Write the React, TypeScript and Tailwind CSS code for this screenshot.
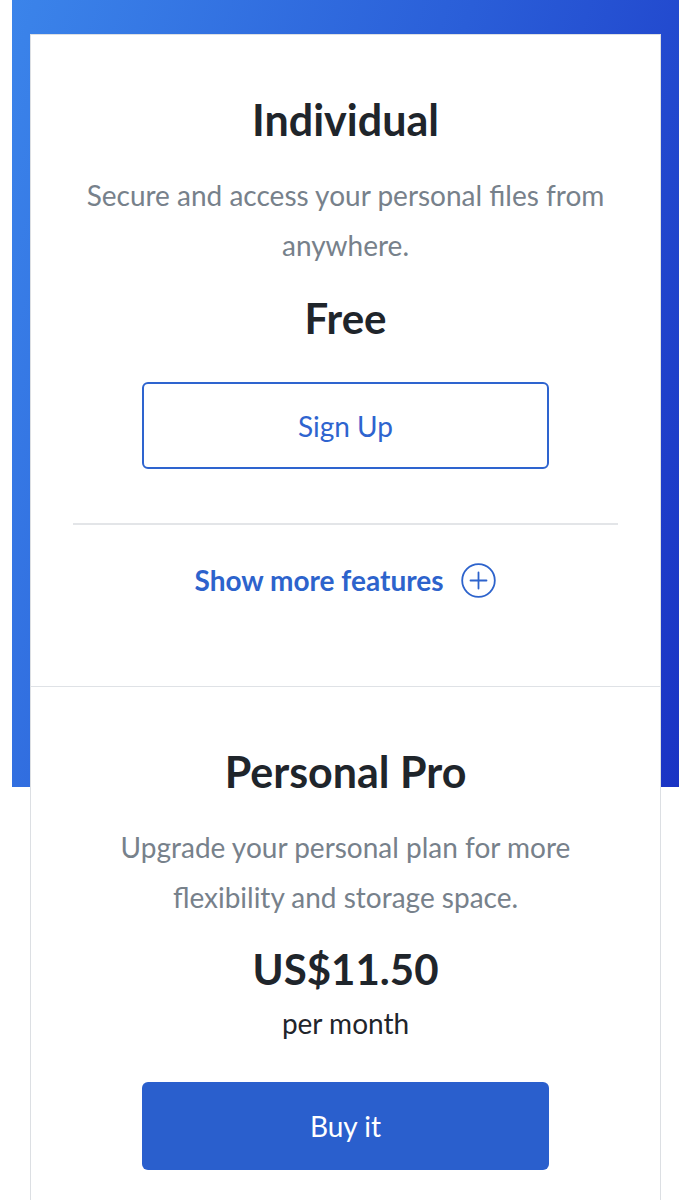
import React from 'react';

interface PlanProps {
  name: string;
  blurb: string;
  children: React.ReactNode;
}

function PlanSection({ name, blurb, children }: PlanProps) {
  return (
    <div className="flex flex-col items-center px-[42px] pt-[61px]">
      <h2 className="text-[43px] leading-[48px] font-bold text-[#1f252b]">{name}</h2>
      <p className="mt-[26px] text-center text-[28px] leading-[50px] text-[#77818b]">{blurb}</p>
      {children}
    </div>
  );
}

function PlusCircle() {
  return (
    <svg width="35" height="35" viewBox="0 0 35 35" fill="none" stroke="#2d63cc" strokeWidth="1.8">
      <circle cx="17.5" cy="17.5" r="16.3" />
      <path d="M17.5 9.5v16M9.5 17.5h16" strokeLinecap="round" />
    </svg>
  );
}

export default function App() {
  return (
    <div className="min-h-[1200px] bg-white font-['Lato','Open_Sans',sans-serif]">
      <div className="ml-[12px] mr-[18px] px-[18px] pt-[34px] bg-no-repeat bg-size-[100%_787px] bg-[linear-gradient(108deg,#3b84ea_0%,#2a5ed8_50%,#1a33c4_100%)]">
        <div className="border border-[#dcdfe3] bg-white">
          <PlanSection name="Individual" blurb="Secure and access your personal files from anywhere.">
            <div className="mt-[25px] text-[42px] leading-[46px] font-bold text-[#1f252b]">Free</div>
            <button className="mt-[41px] flex h-[87px] w-[407px] items-center justify-center rounded-[6px] border-2 border-[#2e64cf] text-[28px] text-[#2e64cf]">
              Sign Up
            </button>
            <div className="mt-[54px] h-[2px] w-full bg-[#e3e5e8]" />
            <button className="mt-[38px] mb-[88px] flex items-center gap-[18px] text-[28px] leading-[35px] font-bold text-[#2d63cc]">
              <span>Show more features</span>
              <PlusCircle />
            </button>
          </PlanSection>

          <div className="h-[1px] bg-[#dfe2e6]" />

          <PlanSection name="Personal Pro" blurb="Upgrade your personal plan for more flexibility and storage space.">
            <div className="mt-[23px] text-[42px] leading-[48px] font-bold text-[#1f252b]">US$11.50</div>
            <div className="mt-[12px] text-[28px] leading-[36px] text-[#1f252b]">per month</div>
            <button className="mt-[41px] mb-[60px] flex h-[88px] w-[407px] items-center justify-center rounded-[6px] bg-[#2a5fcd] text-[28px] text-white">
              Buy it
            </button>
          </PlanSection>
        </div>
      </div>
    </div>
  );
}
